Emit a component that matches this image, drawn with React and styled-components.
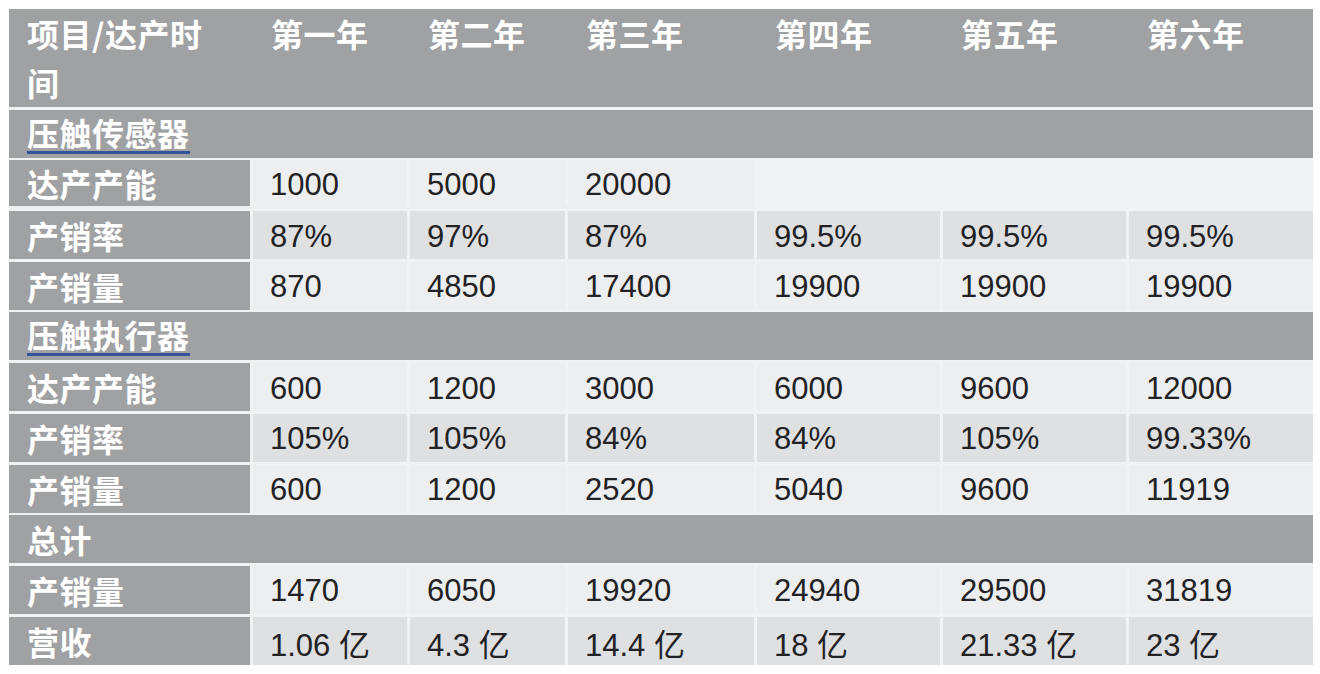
import { Fragment } from 'react';
import styled, { createGlobalStyle } from 'styled-components';

const GlobalStyle = createGlobalStyle`
	html, body {
		margin: 0;
		padding: 0;
		background: #ffffff;
	}
`;

const COLS = '241px 154px 155px 186px 183px 183px 184px';

const Page = styled.div`
	padding: 9px 7px 9px 9px;
	width: 1304px;
	font-family: 'Noto Sans CJK SC', 'Noto Sans', sans-serif;
`;

const Table = styled.div`
	display: grid;
	row-gap: 2.7px;
	background: #f1f2f3;
`;

const Row = styled.div`
	display: grid;
	grid-template-columns: ${COLS};
	column-gap: 3px;
	height: ${(p) => (p.$tall ? '98px' : '48px')};
	background: ${(p) => (p.$band ? '#a0a1a3' : '#f1f2f3')};
`;

const HeadCell = styled.div`
	padding-left: ${(p) => (p.$first ? '18px' : '18px')};
	color: #ffffff;
	font-weight: 700;
	font-size: 32px;
	letter-spacing: 0.5px;
	line-height: 49px;
	white-space: nowrap;
`;

const SectionCell = styled.div`
	grid-column: 1 / -1;
	display: flex;
	align-items: center;
	padding-left: 18px;
	color: #ffffff;
	font-weight: 700;
	font-size: 32px;
	letter-spacing: 0.5px;
`;

const Underlined = styled.span`
	line-height: 37px;
	border-bottom: 3px solid #34539a;
`;

const Label = styled.div`
	display: flex;
	align-items: center;
	padding-left: 18px;
	background: #a0a1a3;
	color: #ffffff;
	font-weight: 700;
	font-size: 32px;
	letter-spacing: 0.5px;
`;

const Value = styled.div`
	display: flex;
	align-items: center;
	padding-left: 17px;
	padding-top: 3px;
	grid-column: ${(p) => (p.$span ? `span ${p.$span}` : 'auto')};
	background: ${(p) => (p.$dark ? '#dfe0e2' : '#edeef0')};
	color: #222224;
	font-family: 'Liberation Sans', 'Noto Sans CJK SC', sans-serif;
	font-size: 31px;
	white-space: nowrap;
`;

const years = ['第一年', '第二年', '第三年', '第四年', '第五年', '第六年'];

const sections = [
	{
		title: '压触传感器',
		underline: true,
		rows: [
			{ label: '达产产能', values: ['1000', '5000', '20000'], fill: 4 },
			{ label: '产销率', dark: true, values: ['87%', '97%', '87%', '99.5%', '99.5%', '99.5%'] },
			{ label: '产销量', values: ['870', '4850', '17400', '19900', '19900', '19900'] },
		],
	},
	{
		title: '压触执行器',
		underline: true,
		rows: [
			{ label: '达产产能', values: ['600', '1200', '3000', '6000', '9600', '12000'] },
			{ label: '产销率', dark: true, values: ['105%', '105%', '84%', '84%', '105%', '99.33%'] },
			{ label: '产销量', values: ['600', '1200', '2520', '5040', '9600', '11919'] },
		],
	},
	{
		title: '总计',
		rows: [
			{ label: '产销量', values: ['1470', '6050', '19920', '24940', '29500', '31819'] },
			{ label: '营收', dark: true, values: ['1.06 亿', '4.3 亿', '14.4 亿', '18 亿', '21.33 亿', '23 亿'] },
		],
	},
];

const App = () => {
	return (
		<>
			<GlobalStyle />
			<Page>
				<Table>
					<Row $tall $band>
						<HeadCell $first>
							项目/达产时
							<br />间
						</HeadCell>
						{years.map((y) => (
							<HeadCell key={y}>{y}</HeadCell>
						))}
					</Row>
					{sections.map((section) => (
						<Fragment key={section.title}>
							<Row $band>
								<SectionCell>
									{section.underline ? (
										<Underlined>{section.title}</Underlined>
									) : (
										section.title
									)}
								</SectionCell>
							</Row>
							{section.rows.map((row, i) => (
								<Row key={i}>
									<Label>{row.label}</Label>
									{row.values.map((v, j) => (
										<Value key={j} $dark={row.dark}>
											{v}
										</Value>
									))}
									{row.fill && <Value $span={row.fill} $dark={row.dark} />}
								</Row>
							))}
						</Fragment>
					))}
				</Table>
			</Page>
		</>
	);
};

export default App;
